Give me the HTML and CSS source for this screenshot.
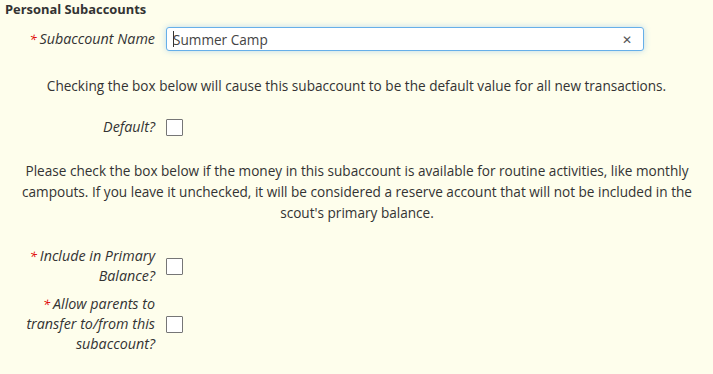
FILE: index.html
```html
<!DOCTYPE html>
<html>
<head>
<meta charset="utf-8">
<link rel="stylesheet" href="styles.css">
</head>
<body>
<div class="page">
  <h3 class="title">Personal Subaccounts</h3>
  <div class="row row-name">
    <label class="label"><span class="req">*</span>Subaccount Name</label>
    <div class="field">
      <div class="input">
        <span class="caret"></span><span class="value">Summer Camp</span>
        <span class="clear">&#x2715;</span>
      </div>
    </div>
  </div>
  <p class="note note-1">Checking the box below will cause this subaccount to be the default value for all new transactions.</p>
  <div class="row row-default">
    <label class="label">Default?</label>
    <div class="field"><span class="check"></span></div>
  </div>
  <p class="note note-2">Please check the box below if the money in this subaccount is available for routine activities, like monthly campouts. If you leave it unchecked, it will be considered a reserve account that will not be included in the scout's primary balance.</p>
  <div class="row row-include">
    <label class="label"><span class="req">*</span>Include in Primary Balance?</label>
    <div class="field"><span class="check"></span></div>
  </div>
  <div class="row row-allow">
    <label class="label"><span class="req">*</span>Allow parents to transfer to/from this subaccount?</label>
    <div class="field"><span class="check"></span></div>
  </div>
</div>
</body>
</html>
```

FILE: styles.css
```css
html, body {
  margin: 0;
  padding: 0;
  background: #fefeec;
}
body {
  font-family: "Open Sans", "DejaVu Sans", sans-serif;
  font-size: 13.6px;
  color: #333333;
  width: 713px;
  height: 374px;
  overflow: hidden;
}
.page {
  padding: 0 0 0 5px;
}
.title {
  margin: 0;
  font-size: 12.9px;
  font-weight: bold;
  line-height: 18px;
  color: #333;
}
.row {
  display: flex;
  align-items: center;
}
.label {
  width: 161px;
  flex: none;
  text-align: right;
  font-style: italic;
  font-size: 14.3px;
  line-height: 20px;
  padding-right: 11px;
  box-sizing: border-box;
}
.req {
  color: #e00000;
  margin-right: 3px;
  font-style: italic;
  font-size: 13px;
}
.row-name {
  margin-top: 9px;
}
.input {
  width: 478px;
  height: 24px;
  box-sizing: border-box;
  border: 1px solid #66afe9;
  border-radius: 3px;
  background: #fff;
  box-shadow: 0 0 6px rgba(102, 175, 233, 0.45);
  display: flex;
  align-items: center;
  padding: 0 11px 0 6px;
  font-size: 13.6px;
  color: #444;
}
.caret {
  width: 1px;
  height: 16px;
  background: #333;
  margin-right: -1px;
}
.value {
  flex: 1;
}
.clear {
  font-size: 12px;
  font-weight: bold;
  color: #555;
  font-style: normal;
}
.note {
  margin: 0;
  text-align: center;
  line-height: 21px;
}
.note-1 {
  margin-top: 24px;
  padding-right: 5px;
}
.row-default {
  margin-top: 21px;
}
.note-2 {
  margin-top: 23px;
  padding: 0 20px 0 16px;
}
.check {
  display: block;
  width: 17px;
  height: 17px;
  box-sizing: border-box;
  border: 1px solid #767676;
  border-radius: 1px;
  background: #fff;
}
.row-include {
  margin-top: 23px;
}
.row-allow {
  margin-top: 8px;
}
```
